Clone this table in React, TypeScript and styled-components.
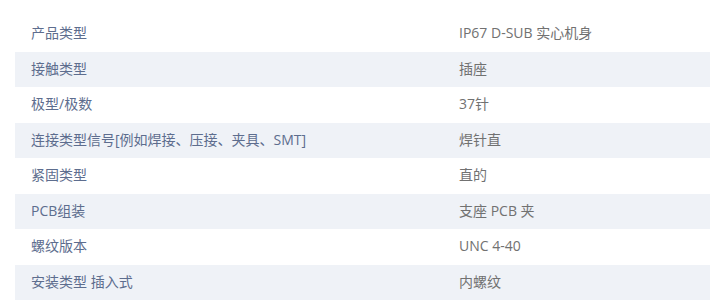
import React from "react"
import styled, { createGlobalStyle } from "styled-components"

const GlobalStyle = createGlobalStyle`
  html, body {
    margin: 0;
    padding: 0;
    background: #fff;
    overflow: hidden;
  }
  body {
    font-family: "Open Sans", "Noto Sans CJK SC", sans-serif;
    font-size: 14px;
  }
`

let SpecRoot = styled.div`
  width: 710px;
  height: 303px;
  padding: 16px 0 0 15px;
  box-sizing: border-box;
  overflow: hidden;
`

let SpecTable = styled.div`
  width: 856px;
  display: grid;
  grid-template-columns: 428px 428px;
  grid-auto-rows: 35.5px;
`

let SpecRow = styled.div<{ $striped: boolean }>`
  display: contents;

  & > div {
    background: ${(p) => (p.$striped ? "#eff2f7" : "#fff")};
  }
`

let SpecLabel = styled.div`
  display: flex;
  align-items: center;
  padding: 0 0 3px 16px;
  color: #5d6d8e;
  white-space: nowrap;
`

let SpecValue = styled.div`
  display: flex;
  align-items: center;
  padding: 0 0 3px 16px;
  color: #717171;
  white-space: nowrap;
`

const specs: [string, string][] = [
  ["产品类型", "IP67 D-SUB 实心机身"],
  ["接触类型", "插座"],
  ["极型/极数", "37针"],
  ["连接类型信号[例如焊接、压接、夹具、SMT]", "焊针直"],
  ["紧固类型", "直的"],
  ["PCB组装", "支座 PCB 夹"],
  ["螺纹版本", "UNC 4-40"],
  ["安装类型 插入式", "内螺纹"],
]

export default function App() {
  return (
    <>
      <GlobalStyle />
      <SpecRoot>
        <SpecTable>
          {specs.map(([label, value], i) => (
            <SpecRow key={label} $striped={i % 2 === 1}>
              <SpecLabel>{label}</SpecLabel>
              <SpecValue>{value}</SpecValue>
            </SpecRow>
          ))}
        </SpecTable>
      </SpecRoot>
    </>
  )
}
